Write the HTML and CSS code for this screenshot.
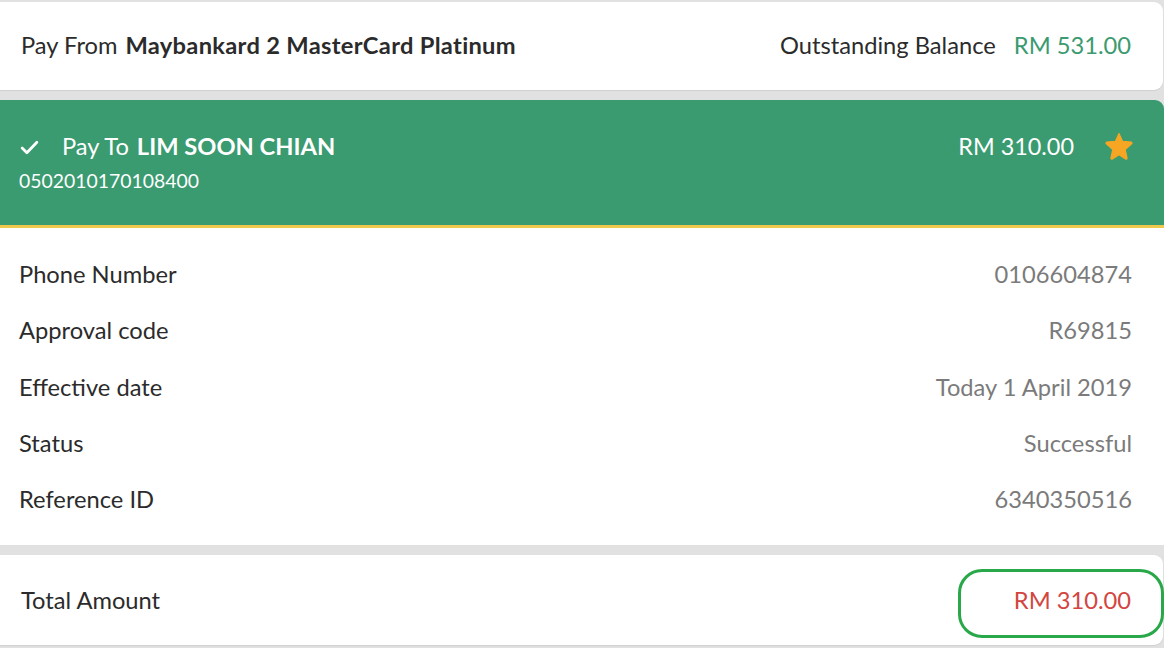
FILE: index.html
```html
<!DOCTYPE html>
<html>
<head>
<meta charset="utf-8">
<link rel="stylesheet" href="styles.css">
</head>
<body>
<div class="page">
  <section class="card from">
    <div class="from-left"><span class="lbl">Pay From</span><span class="strong">Maybankard 2 MasterCard Platinum</span></div>
    <div class="from-right"><span class="lbl">Outstanding Balance</span><span class="green-amt">RM 531.00</span></div>
  </section>

  <section class="payee">
    <div class="payee-top">
      <div class="payee-name">
        <svg class="check" width="19" height="15" viewBox="0 0 18 14"><path d="M2 7.5 L6.5 12 L16 2" fill="none" stroke="#fff" stroke-width="2.6" stroke-linecap="round" stroke-linejoin="round"/></svg>
        <span class="payto">Pay To</span><span class="name">LIM SOON CHIAN</span>
      </div>
      <div class="payee-right">
        <span class="payee-amt">RM 310.00</span>
        <svg class="star" width="30" height="28" viewBox="0 0 24 23"><path d="M12 1.2 L14.9 7.6 L21.9 8.3 C22.6 8.4 22.9 9.2 22.4 9.7 L17.1 14.4 L18.6 21.3 C18.8 22 18 22.5 17.4 22.1 L12 18.6 L6.6 22.1 C6 22.5 5.2 22 5.4 21.3 L6.9 14.4 L1.6 9.7 C1.1 9.2 1.4 8.4 2.1 8.3 L9.1 7.6 Z" fill="#f6a623" stroke="#f6a623" stroke-width="1" stroke-linejoin="round"/></svg>
      </div>
    </div>
    <div class="acct">0502010170108400</div>
  </section>

  <section class="details">
    <div class="row"><span>Phone Number</span><span class="val">0106604874</span></div>
    <div class="row"><span>Approval code</span><span class="val">R69815</span></div>
    <div class="row"><span>Effective date</span><span class="val">Today 1 April 2019</span></div>
    <div class="row"><span>Status</span><span class="val">Successful</span></div>
    <div class="row"><span>Reference ID</span><span class="val">6340350516</span></div>
  </section>

  <section class="card total">
    <span class="lbl">Total Amount</span>
    <span class="red-amt">RM 310.00</span>
    <div class="circle"></div>
  </section>
</div>
</body>
</html>
```

FILE: styles.css
```css
html, body {
  margin: 0;
  padding: 0;
}
body {
  background: #e1e1e1;
  font-family: Lato, "Open Sans", sans-serif;
  color: #2b2b2b;
  width: 1164px;
  height: 648px;
  overflow: hidden;
}
.page {
  display: flex;
  flex-direction: column;
  padding-top: 2px;
}
.card {
  background: #fff;
  margin-right: 1px;
  border-radius: 0 9px 9px 0;
  display: flex;
  align-items: center;
  justify-content: space-between;
  box-shadow: 0 1px 1px rgba(0,0,0,0.08);
}
.from {
  height: 88px;
  padding: 0 32px 2px 21px;
  box-sizing: border-box;
  font-size: 23.7px;
}
.from-left, .from-right {
  display: flex;
  align-items: baseline;
}
.from .lbl {
  margin-right: 8px;
}
.strong {
  font-weight: 700;
  letter-spacing: 0.3px;
}
.from-right .lbl {
  margin-right: 18px;
}
.green-amt {
  color: #3c9a70;
}
.payee {
  margin-top: 10px;
  background: #3a9a70;
  border-top-right-radius: 9px;
  border-bottom: 3px solid #efc94c;
  box-sizing: border-box;
  height: 128px;
  padding: 29px 32px 0 19px;
  color: #fff;
}
.payee-top {
  display: flex;
  justify-content: space-between;
  align-items: center;
  height: 34px;
}
.payee-name {
  display: flex;
  align-items: center;
  font-size: 23.7px;
}
.check {
  margin: 2px 23px 0 1px;
}
.payto {
  margin-right: 8px;
}
.name {
  font-weight: 700;
}
.payee-right {
  display: flex;
  align-items: center;
}
.payee-amt {
  font-size: 23.4px;
}
.star {
  margin: 0 -2px 0 30px;
}
.acct {
  font-size: 19.4px;
  margin-top: 6px;
  line-height: 24px;
}
.details {
  background: #fff;
  height: 317px;
  box-sizing: border-box;
  padding: 18px 32px 0 19px;
  display: flex;
  flex-direction: column;
}
.row {
  display: flex;
  justify-content: space-between;
  align-items: center;
  height: 56.3px;
  font-size: 23.7px;
}
.val {
  color: #7b7b7b;
}
.total {
  margin-top: 10px;
  height: 90px;
  padding: 0 32px 0 21px;
  font-size: 23.7px;
  position: relative;
}
.red-amt {
  color: #d2463f;
}
.circle {
  position: absolute;
  left: 958px;
  top: 14px;
  width: 200px;
  height: 63px;
  border: 3px solid #29a84a;
  border-radius: 24px;
}
```
